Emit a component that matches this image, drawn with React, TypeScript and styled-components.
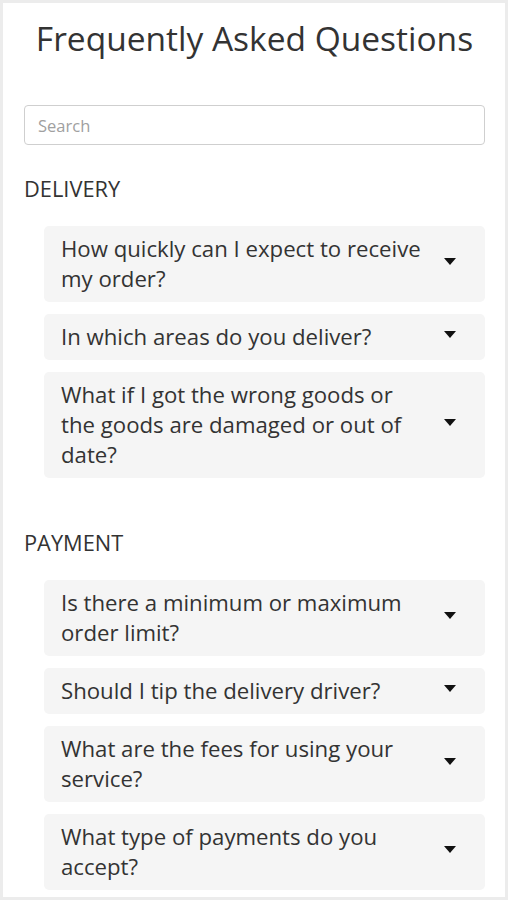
import styled, { createGlobalStyle } from 'styled-components'

const GlobalStyle = createGlobalStyle`
  html, body {
    margin: 0;
    padding: 0;
    background: #ffffff;
  }
  * {
    box-sizing: border-box;
  }
`

const Frame = styled.div`
  width: 508px;
  min-height: 900px;
  border: 3px solid #ececec;
  padding: 0 20px 0 21px;
  font-family: 'Open Sans', 'Noto Sans', sans-serif;
  color: #333;
  background: #fff;
`

const Title = styled.h1`
  margin: 0;
  padding-top: 14px;
  font-size: 33.5px;
  line-height: 42px;
  font-weight: 400;
  text-align: center;
  color: #333;
`

const SearchInput = styled.input`
  display: block;
  width: 100%;
  height: 40px;
  margin-top: 46px;
  padding: 0 13px;
  border: 1px solid #cfcfcf;
  border-radius: 4px;
  font-family: inherit;
  font-size: 16.5px;
  color: #333;
  outline: none;

  &::placeholder {
    color: #a0a0a0;
  }
`

const Section = styled.section`
  margin-top: 30px;

  & + & {
    margin-top: 51px;
  }
`

const SectionTitle = styled.h2`
  margin: 0;
  font-size: 21.8px;
  line-height: 28px;
  font-weight: 400;
  text-transform: uppercase;
  color: #333;
`

const QuestionList = styled.div`
  display: flex;
  flex-direction: column;
  gap: 12px;
  margin: 23px 0 0 20px;
`

const Question = styled.div`
  display: flex;
  align-items: center;
  gap: 19px;
  padding: 8px 29px 8px 17px;
  background: #f5f5f5;
  border-radius: 5px;
  font-size: 22.2px;
  line-height: 30px;
  color: #333;
  cursor: pointer;
`

const QuestionText = styled.span`
  flex: 1;
`

const Caret = styled.svg`
  flex: none;
  width: 12px;
  height: 7px;
  margin-bottom: 6px;
`

const sections = [
  {
    name: 'Delivery',
    questions: [
      'How quickly can I expect to receive my order?',
      'In which areas do you deliver?',
      'What if I got the wrong goods or the goods are damaged or out of date?',
    ],
  },
  {
    name: 'Payment',
    questions: [
      'Is there a minimum or maximum order limit?',
      'Should I tip the delivery driver?',
      'What are the fees for using your service?',
      'What type of payments do you accept?',
    ],
  },
]

export default function App() {
  return (
    <>
      <GlobalStyle />
      <Frame>
        <Title>Frequently Asked Questions</Title>
        <SearchInput placeholder="Search" />
        {sections.map((section) => (
          <Section key={section.name}>
            <SectionTitle>{section.name}</SectionTitle>
            <QuestionList>
              {section.questions.map((q) => (
                <Question key={q}>
                  <QuestionText>{q}</QuestionText>
                  <Caret viewBox="0 0 12 7">
                    <path d="M0 0 H12 L6 7 Z" fill="#111" />
                  </Caret>
                </Question>
              ))}
            </QuestionList>
          </Section>
        ))}
      </Frame>
    </>
  )
}
